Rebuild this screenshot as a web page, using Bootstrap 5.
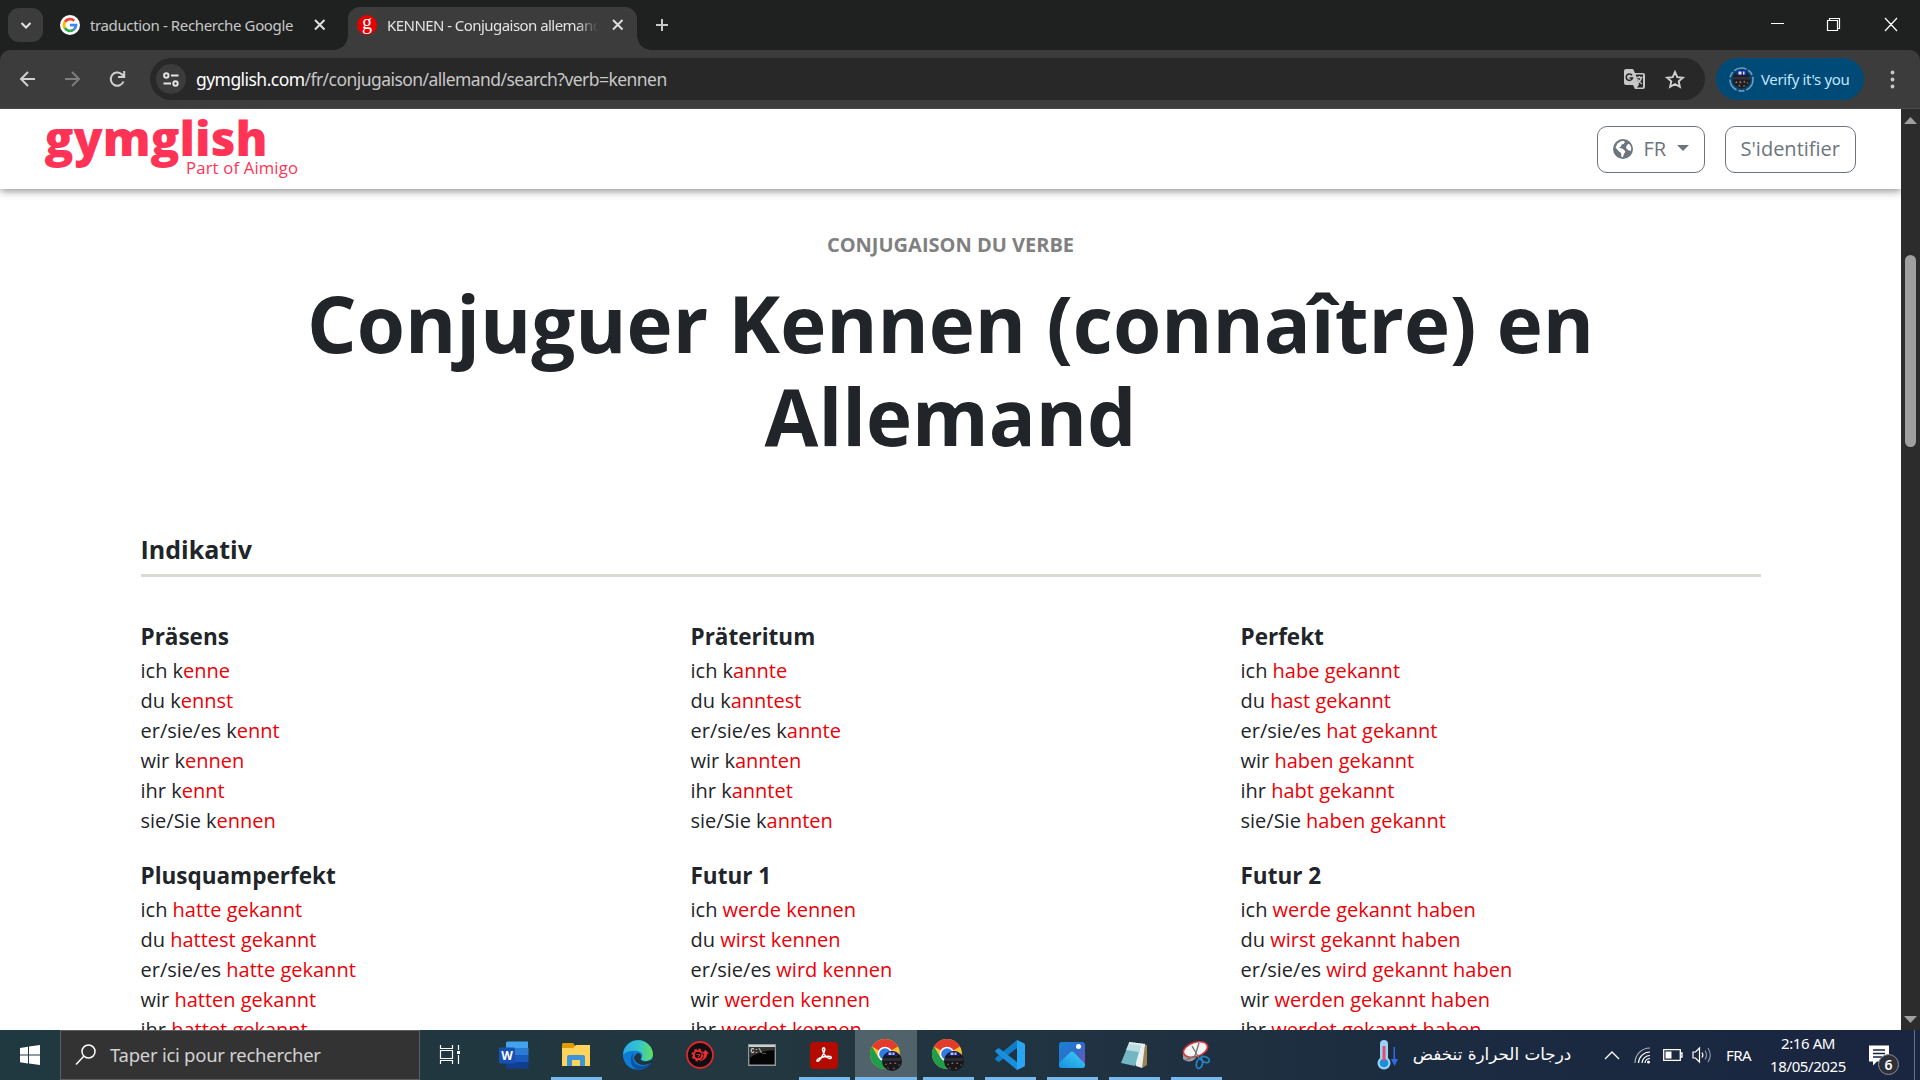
<!DOCTYPE html>
<html lang="fr">
<head>
<meta charset="utf-8">
<title>KENNEN - Conjugaison allemand</title>
<link href="https://cdn.jsdelivr.net/npm/bootstrap@5.3.0/dist/css/bootstrap.min.css" rel="stylesheet">
<script src="https://cdn.jsdelivr.net/npm/bootstrap@5.3.0/dist/js/bootstrap.bundle.min.js"></script>
<style>
  html, body { height: 1080px; overflow: hidden; }
  body { font-family: "Open Sans", "Noto Sans", sans-serif; font-size: 20px; color: #212529; background: #1f2120; }
  svg { display: block; flex: none; overflow: visible; }
  .desk { width: 1920px; height: 1080px; }
  .ui { font-family: "Noto Sans", "Open Sans", sans-serif; }

  /* browser tabs */
  .tabstrip { height: 50px; background: #1f2120; color: #c7c7c7; font-size: 15px; padding-left: 8px; }
  .tabsearch { width: 35px; height: 34px; border-radius: 11px; background: #3c3c3c; }
  .tab-idle { width: 305px; padding: 0 22px 0 17px; }
  .tab-live { width: 289px; height: 43px; margin-top: 7px; padding: 0 13px 7px 9px; border-radius: 12px 12px 0 0; background: #3c3c3c; color: #e3e3e3; position: relative; }
  .tab-live::before, .tab-live::after { content: ""; position: absolute; bottom: 0; width: 14px; height: 14px; }
  .tab-live::before { left: -14px; background: radial-gradient(circle at 0 0, transparent 13.5px, #3c3c3c 14px); }
  .tab-live::after { right: -14px; background: radial-gradient(circle at 100% 0, transparent 13.5px, #3c3c3c 14px); }
  .tab-label { white-space: nowrap; overflow: hidden; letter-spacing: -.37px; margin-left: 10px; }
  .tab-live .tab-label { width: 211px; letter-spacing: -.55px; -webkit-mask-image: linear-gradient(90deg, #000 90%, transparent); mask-image: linear-gradient(90deg, #000 90%, transparent); }

  /* address bar */
  .toolbar { height: 59px; background: #3c3c3c; border-bottom: 1px solid #4a4a4a; border-radius: 10px 10px 0 0; padding: 0 19px 0 20px; }
  .omnibox { width: 1555px; height: 42px; border-radius: 21px; background: #282828; padding: 0 20px 0 6px; }
  .sitechip { width: 30px; height: 30px; border-radius: 50%; background: #3c3c3c; }
  .url { font-size: 17.5px; color: #c7c7c7; letter-spacing: -.55px; margin-left: 10px; }
  .url b { font-weight: 400; color: #fff; }
  .verify { width: 148px; height: 42px; border-radius: 21px; background: #004a77; color: #c2e7ff; font-size: 15px; letter-spacing: -.34px; padding-left: 13px; white-space: nowrap; }

  /* site */
  .viewport { height: 921px; }
  .site { width: 1901px; height: 921px; overflow: hidden; background: #fff; }
  .sitehead { height: 80px; padding: 0 45px; box-shadow: 0 2px 8px rgba(0,0,0,.45); position: relative; background: #fff; }
  .sitehead .btn { height: 47px; border-radius: 10px; font-size: 20px; line-height: 30px; padding: 7px 15px; }
  .lang { width: 108px; }
  .verbpage { width: 1650px; margin: 0 auto; padding-top: 41px; }
  .kicker { font-size: 20px; line-height: 30px; font-weight: 700; color: #808080; margin-bottom: 17px; }
  .verbtitle { font-size: 78px; line-height: 93px; font-weight: 700; padding: 0 100px; margin-bottom: 71px; }
  .mood { font-size: 25px; line-height: 30px; font-weight: 700; margin: 0 15px 45px; padding-bottom: 10px; border-bottom: 3px solid #dadad5; }
  .tense { width: 550px; padding: 0 15px; margin-bottom: 25px; }
  .tense h3 { font-size: 22.5px; line-height: 30.8px; font-weight: 700; margin-bottom: 3px; }
  .tense li { line-height: 30px; }
  .tense i { font-style: normal; color: #eb0008; }
  .scroller { width: 19px; background: #2c2c2c; padding: 8px 0 7px; }
  .thumb { width: 11px; height: 192px; border-radius: 6px; background: #9f9f9f; margin-top: 131px; }

  /* taskbar */
  .taskbar { height: 50px; background: linear-gradient(90deg, #203840 0%, #22373f 40%, #1f3141 62%, #1b2a40 78%, #1a2540 100%); color: #fff; }
  .findbox { width: 360px; background: #333; border: 1px solid #5a5f61; font-size: 18.5px; color: #d2d2d2; padding-left: 14px; letter-spacing: -.26px; white-space: nowrap; }
  .appbtn { width: 62px; height: 50px; position: relative; }
  .appbtn.open::after { content: ""; position: absolute; left: 6px; right: 5px; bottom: 0; height: 3px; background: #76b9ed; }
  .appbtn.front { background: #50626a; }
  .appbtn.front::after { left: 0; right: 0; }
  .tray { font-size: 15.5px; white-space: nowrap; }
  .arab { font-family: "DejaVu Sans", sans-serif; font-size: 16.8px; width: 160px; }
  .clock { width: 82px; line-height: 23px; font-size: 15px; letter-spacing: -.4px; }
</style>
</head>
<body>
<svg width="0" height="0" class="position-absolute">
  <defs>
    <g id="chromeLogo">
      <circle cx="15" cy="15" r="15" fill="#fbc02d"/>
      <path d="M15 15 2 7.500A15 15 0 0 1 28 7.500Z" fill="#e33b2e"/>
      <path d="M2 7.500A15 15 0 0 0 15 30L21.500 18.700 8.500 18.700Z" fill="#1e9e4a"/>
      <circle cx="15" cy="15" r="7.300" fill="#fff"/>
      <circle cx="15" cy="15" r="5.800" fill="#2f7de1"/>
      <circle cx="22" cy="22" r="10" fill="#17171c"/>
      <path d="M16 14.500Q22 10 28 14.500V17H16z" fill="#141f6e"/><path d="M18.500 13.500h3v2.500h-3zM22.500 13.500h2v2.500h-2z" fill="#b8c2f0"/>
      <path d="M13 19h18v3H13z" fill="#2a2d36"/>
      <path d="M15 26l1-2 1 2zM19 25l1.500-2 1 2zM24 25l1-2 1.500 2zM28 27l1-2 1 1zM17 29l1-1 1 2zM23 30l1-2 1 2z" fill="#8d6450"/>
    </g>
    <path id="cross" d="M0 0 9.500 9.500M9.500 0 0 9.500" stroke="#dedede" stroke-width="2" fill="none"/>
  </defs>
</svg>

<div class="desk d-flex flex-column">
  <div class="tabstrip ui d-flex align-items-center">
    <div class="tabsearch d-flex align-items-center justify-content-center">
      <svg width="10" height="7"><path d="M.5 1 5 5.500 9.500 1" fill="none" stroke="#e3e3e3" stroke-width="2"/></svg>
    </div>
    <div class="tab-idle d-flex align-items-center">
      <svg width="20" height="20" viewBox="0 0 20 20"><circle cx="10" cy="10" r="10" fill="#fff"/>
        <g fill="none" stroke-width="2.800"><path d="M14.200 5.800A6 6 0 0 0 4.900 6.900" stroke="#ea4335"/><path d="M4.900 6.900a6 6 0 0 0 0 6.200" stroke="#fbbc05"/><path d="M4.900 13.100a6 6 0 0 0 9 1.400" stroke="#34a853"/><path d="M13.900 14.500A6 6 0 0 0 16 10.200H10" stroke="#4285f4"/></g></svg>
      <span class="tab-label flex-grow-1">traduction - Recherche Google</span>
      <svg width="11" height="10"><use href="#cross"/></svg>
    </div>
    <div class="tab-live d-flex align-items-center align-self-start">
      <svg width="20" height="20" viewBox="0 0 20 20"><circle cx="10" cy="10" r="10" fill="#e60000"/><text x="10" y="13.500" text-anchor="middle" font-family="Liberation Serif" font-size="20" fill="#fff">g</text></svg>
      <span class="tab-label">KENNEN - Conjugaison allemand</span>
      <svg class="ms-auto" width="11" height="10"><use href="#cross"/></svg>
    </div>
    <svg style="margin-left:18px" width="14" height="12"><path d="M1 6H13M7 0V12" stroke="#c7c7c7" stroke-width="2"/></svg>
    <svg class="ms-auto" width="172" height="50"><g fill="none" stroke="#fff" stroke-width="1.200"><path d="M23 23.500H36M79.500 20.500h10v10h-10zM81.500 20.500v-2h10v10h-2M137 18 149 31M149 18 137 31"/></g></svg>
  </div>

  <div class="toolbar ui d-flex align-items-center">
    <svg width="130" height="20"><g fill="none" stroke-width="2"><path d="M15 10H1M8 3 1 10 8 17" stroke="#d0d0d0"/><path d="M45 10H59M52 3 59 10 52 17" stroke="#7c7c7c"/><path d="M103.500 12.500A6.600 6.600 0 1 1 101.500 5L104 7.500M104.200 2V8H98" stroke="#d0d0d0"/></g></svg>
    <div class="omnibox d-flex align-items-center">
      <div class="sitechip d-flex align-items-center justify-content-center">
        <svg width="16" height="15"><g fill="none" stroke="#e3e3e3" stroke-width="2"><circle cx="3.300" cy="3.500" r="2.200"/><path d="M8 3.500h7.500M.5 11.500H8"/><circle cx="12.500" cy="11.500" r="2.200"/></g></svg>
      </div>
      <span class="url"><b>gymglish.com</b>/fr/conjugaison/allemand/search?verb=kennen</span>
      <svg class="ms-auto" width="21" height="21" viewBox="0 0 21 21"><path d="M2 0h7l2 4h8a2 2 0 0 1 2 2v12a2 2 0 0 1-2 2h-8l-2-4H2a2 2 0 0 1-2-2V2a2 2 0 0 1 2-2z" fill="#c7c7c7"/><path d="M11.700 5.500H19v13h-6l2-3z" fill="#282828"/><path d="M8 6.300A3.200 3.200 0 1 0 8.500 9H5.500" fill="none" stroke="#282828" stroke-width="1.500"/><path d="M12.500 8.500h6M15.500 7v1.500M17.500 8.500q-1 4-4 5.500M13.500 10q2 3.500 4.500 5" fill="none" stroke="#c7c7c7" stroke-width="1.300"/></svg>
      <svg style="margin-left:20px" width="20" height="19" viewBox="0 0 20 19"><path d="M10 2 12.300 7.100 17.900 7.700 13.700 11.400 14.900 16.900 10 14 5.100 16.900 6.300 11.400 2.100 7.700 7.700 7.100Z" fill="none" stroke="#d0d0d0" stroke-width="1.900"/></svg>
    </div>
    <div class="verify d-flex align-items-center" style="margin-left:11px">
      <svg width="25" height="25" viewBox="0 0 25 25"><circle cx="12.500" cy="12.500" r="11.500" fill="none" stroke="#6f9dbb" stroke-width="1.600" stroke-dasharray="13 2 6 2"/><circle cx="12.500" cy="12.500" r="9" fill="#1d1d24"/><path d="M7.500 5Q12.500 2 17.500 5V8h-10z" fill="#1b27a8"/><path d="M9.500 4.500h3v3h-3zM14 4.500h1.500v3H14z" fill="#dfe3ff"/><path d="M4 10h17v2.500H4z" fill="#30333c"/><path d="M6 16l1.500-2 1 2zM10 15.500l1.500-2 1 3zM14 15l1.500-1.500 1 2.500zM17.500 17l1-2 1 1zM9 19l1.500-1.500 1 2.500zM14 20l1-2 1.500 1z" fill="#a87a60"/></svg>
      <span style="margin-left:7px">Verify it's you</span>
    </div>
    <svg style="margin-left:26px" width="5" height="19"><g fill="#c7c7c7"><circle cx="2.500" cy="2.500" r="1.900"/><circle cx="2.500" cy="9.500" r="1.900"/><circle cx="2.500" cy="16.500" r="1.900"/></g></svg>
  </div>

  <div class="viewport d-flex">
    <div class="site">
      <header class="sitehead d-flex align-items-center">
        <svg width="255" height="80" fill="#ff3355" font-family="Open Sans">
          <text x="-.5" y="46.500" font-size="47.500" font-weight="800" textLength="223" lengthAdjust="spacingAndGlyphs">gymglish</text>
          <text x="141" y="65.300" font-size="16.700" textLength="112">Part of Aimigo</text>
        </svg>
        <button class="btn btn-outline-secondary lang ms-auto d-flex align-items-center">
          <svg width="20" height="20" viewBox="0 0 20 20"><circle cx="10" cy="10" r="10" fill="#6c757d"/><path d="M4.500 4.500Q7 1.800 10.500 1.700L12 3 10.500 5 8.500 5.500 8 7.500 6 8.500 10 10 12.500 12.500 11 15 9.800 18.300 8.500 18 8 14 5.500 12 2.500 8.500ZM13.500 7 15 5 17 5.500 18.300 9 17.800 12 16 11.500 14.500 10.500 13 9Z" fill="#fff"/></svg>
          <span style="margin-left:11px">FR</span>
          <svg class="ms-auto mb-1" width="12" height="7"><path d="M0 1H12L6 7Z" fill="#6c757d"/></svg>
        </button>
        <button class="btn btn-outline-secondary" style="margin-left:20px">S'identifier</button>
      </header>
      <main class="verbpage">
        <div class="kicker text-center">CONJUGAISON DU VERBE</div>
        <h1 class="verbtitle text-center">Conjuguer Kennen (connaître) en Allemand</h1>
        <h2 class="mood">Indikativ</h2>
        <div class="d-flex flex-wrap">
          <section class="tense"><h3>Präsens</h3><ul class="list-unstyled mb-0"><li>ich k<i>enne</i></li><li>du k<i>ennst</i></li><li>er/sie/es k<i>ennt</i></li><li>wir k<i>ennen</i></li><li>ihr k<i>ennt</i></li><li>sie/Sie k<i>ennen</i></li></ul></section>
          <section class="tense"><h3>Präteritum</h3><ul class="list-unstyled mb-0"><li>ich k<i>annte</i></li><li>du k<i>anntest</i></li><li>er/sie/es k<i>annte</i></li><li>wir k<i>annten</i></li><li>ihr k<i>anntet</i></li><li>sie/Sie k<i>annten</i></li></ul></section>
          <section class="tense"><h3>Perfekt</h3><ul class="list-unstyled mb-0"><li>ich <i>habe gekannt</i></li><li>du <i>hast gekannt</i></li><li>er/sie/es <i>hat gekannt</i></li><li>wir <i>haben gekannt</i></li><li>ihr <i>habt gekannt</i></li><li>sie/Sie <i>haben gekannt</i></li></ul></section>
          <section class="tense"><h3>Plusquamperfekt</h3><ul class="list-unstyled mb-0"><li>ich <i>hatte gekannt</i></li><li>du <i>hattest gekannt</i></li><li>er/sie/es <i>hatte gekannt</i></li><li>wir <i>hatten gekannt</i></li><li>ihr <i>hattet gekannt</i></li></ul></section>
          <section class="tense"><h3>Futur 1</h3><ul class="list-unstyled mb-0"><li>ich <i>werde kennen</i></li><li>du <i>wirst kennen</i></li><li>er/sie/es <i>wird kennen</i></li><li>wir <i>werden kennen</i></li><li>ihr <i>werdet kennen</i></li></ul></section>
          <section class="tense"><h3>Futur 2</h3><ul class="list-unstyled mb-0"><li>ich <i>werde gekannt haben</i></li><li>du <i>wirst gekannt haben</i></li><li>er/sie/es <i>wird gekannt haben</i></li><li>wir <i>werden gekannt haben</i></li><li>ihr <i>werdet gekannt haben</i></li></ul></section>
        </div>
      </main>
    </div>
    <div class="scroller d-flex flex-column align-items-center">
      <svg width="13" height="7"><path d="M0 7 6.500 0 13 7Z" fill="#9f9f9f"/></svg>
      <div class="thumb"></div>
      <svg class="mt-auto" width="13" height="7"><path d="M0 0 6.500 7 13 0Z" fill="#9f9f9f"/></svg>
    </div>
  </div>

  <div class="taskbar ui d-flex align-items-center">
    <svg width="60" height="50"><path d="M20 18 28 16.800V24.500H20ZM29 16.600 40 15V24.500H29ZM20 25.500H28V33.400L20 32.300ZM29 25.500H40V35L29 33.600Z" fill="#fff"/></svg>
    <div class="findbox d-flex align-items-center align-self-stretch">
      <svg width="22" height="22"><circle cx="13.500" cy="7.500" r="6.500" fill="none" stroke="#fff" stroke-width="1.500"/><path d="M9 12 1 20.500" stroke="#fff" stroke-width="1.500"/></svg>
      <span style="margin-left:13px">Taper ici pour rechercher</span>
    </div>
    <svg width="63" height="50"><g fill="none" stroke="#fff" stroke-width="1.200"><path d="M20.500 15v3.500h12V15M20.500 34v-3.500h12V34M20.500 20.500h12v8h-12zM38.500 15v5M38.500 25v9"/></g><path d="M37 21h3v3h-3z" fill="#fff"/></svg>

    <div class="appbtn d-flex align-items-center justify-content-center">
      <svg width="30" height="28" viewBox="0 0 30 28"><path d="M7 2a1.500 1.500 0 0 1 1.500-1.500H29V7.500H7z" fill="#41a5ee"/><path d="M7 7h22.500v7H7z" fill="#2b7cd3"/><path d="M7 14h22.500v7H7z" fill="#185abd"/><path d="M7 21h22.500v6.500H8.500A1.500 1.500 0 0 1 7 26z" fill="#103f91"/><rect y="6.500" width="16" height="16" rx="1.500" fill="#1650b0"/><text x="8" y="19" text-anchor="middle" font-family="Open Sans" font-weight="700" font-size="12" fill="#fff">W</text></svg>
    </div>
    <div class="appbtn open d-flex align-items-center justify-content-center">
      <svg width="28" height="24" viewBox="0 0 28 24"><path d="M0 1.500A1.500 1.500 0 0 1 1.500 0H11l2 2.500V8H0z" fill="#e09b00"/><path d="M0 5h11l3-3h14v21H0z" fill="#ffd35c"/><path d="M5 23V14a2 2 0 0 1 2-2h14a2 2 0 0 1 2 2v9h-5v-6h-8v6z" fill="#3b94d9"/></svg>
    </div>
    <div class="appbtn d-flex align-items-center justify-content-center">
      <svg width="30" height="30" viewBox="0 0 30 30"><defs><linearGradient id="edgeTop"><stop stop-color="#2aa9e8"/><stop offset=".55" stop-color="#36c6c8"/><stop offset="1" stop-color="#63e055"/></linearGradient></defs><circle cx="15" cy="15" r="15" fill="#0c7cd5"/><path d="M.3 12.500A15 15 0 0 1 30 14c0 5-4 7-7.500 7-3 0-4.500-1-4-2.500 2-2 1-7-4.500-7.500-6-.5-11 0-13.700 4z" fill="url(#edgeTop)"/><path d="M11 13c-4 6 1 14 9 13 4-.5 6-2 8-3.500A15 15 0 0 1 16 30C8 29 5 17 11 13z" fill="#0c52a0"/><path d="M12 16c1-3 4-4 6-1 .5 2-.5 3-.5 4 0 2 4 3.500 9 1.500l3.500-1.500v2.500l-3.500 2c-4 2-9 2-12-.5-2-1.500-4-4-3.500-6.500z" fill="#21343e"/></svg>
    </div>
    <div class="appbtn d-flex align-items-center justify-content-center">
      <svg width="28" height="28" viewBox="0 0 28 28"><circle cx="14" cy="14" r="13" fill="#0f0f12" stroke="#e0272c" stroke-width="1.800"/><circle cx="12" cy="14" r="4.200" fill="none" stroke="#ee2d31" stroke-width="2"/><circle cx="12" cy="14" r="5.700" fill="none" stroke="#ee2d31" stroke-width="1.600" stroke-dasharray="2.400 2.070"/><path d="M10.500 13.500h3.500M13.500 14q0 2-2 2" stroke="#ee2d31" fill="none"/><path d="M13 20q4.500-1 4.700-7H15.500L19.500 8.500l4 4.500h-2q-.5 6-8.500 8z" fill="#ee2d31" stroke="#0f0f12" stroke-width=".6"/></svg>
    </div>
    <div class="appbtn d-flex align-items-center justify-content-center">
      <svg width="28" height="22" viewBox="0 0 28 22"><path d="M.7.700h26.600v20.600H.7z" fill="#050505" stroke="#8f979b" stroke-width="1.400"/><path d="M1 1h26v2H1z" fill="#c9ced0"/><path d="M1.500 3h25v3Q10 7 1.500 14z" fill="#343434"/><text x="2.500" y="9" font-family="Liberation Mono" font-weight="700" font-size="6.500" fill="#ddd">C:\_</text></svg>
    </div>
    <div class="appbtn open d-flex align-items-center justify-content-center">
      <svg width="28" height="27" viewBox="0 0 28 27"><rect width="28" height="27" rx="4" fill="#b30b00"/><path d="M12.500 7.500c0-2.300 2.600-2.300 2.200.5C14 12 10.500 17.500 8.500 19c-1.800 1-2.200-.8-.5-2 3-2 9-3.100 12-2.500 2.200.6 1.300 2.300-.7 1.900C16 15.500 13 11.500 12.500 7.500z" fill="none" stroke="#fff" stroke-width="1.500"/></svg>
    </div>
    <div class="appbtn open front d-flex align-items-center justify-content-center"><svg width="32" height="32"><use href="#chromeLogo"/></svg></div>
    <div class="appbtn open d-flex align-items-center justify-content-center"><svg width="32" height="32"><use href="#chromeLogo"/></svg></div>
    <div class="appbtn open d-flex align-items-center justify-content-center">
      <svg width="30" height="30" viewBox="0 0 30 30"><path d="M22 0v8L4 22l-1.500-.500L.3 19.500V18z" fill="#0f7dc8"/><path d="M.3 10.500 3 8.200l1.500.3L22 22v8L.3 12z" fill="#1a8ddb"/><path d="M22 0 28.500 3Q30 3.700 30 5V25Q30 26.300 28.500 27L22 30z" fill="#2aa5f3"/></svg>
    </div>
    <div class="appbtn open d-flex align-items-center justify-content-center">
      <svg width="26" height="26" viewBox="0 0 26 26"><defs><linearGradient id="photoSky" x2="1" y2="1"><stop stop-color="#1583d8"/><stop offset=".5" stop-color="#2f6dc8"/><stop offset="1" stop-color="#8a4bb8"/></linearGradient><linearGradient id="photoHill" x1="1" y1="0" x2="0" y2="1"><stop stop-color="#3fd0f7"/><stop offset="1" stop-color="#1590dd"/></linearGradient></defs><rect width="26" height="26" rx="3" fill="url(#photoSky)"/><path d="M0 21 11 10.500q2-2 4 0L26 22v1a3 3 0 0 1-3 3H3a3 3 0 0 1-3-3z" fill="url(#photoHill)"/><circle cx="19.500" cy="4.500" r="2.500" fill="#fff"/></svg>
    </div>
    <div class="appbtn open d-flex align-items-center justify-content-center">
      <svg width="28" height="28" viewBox="0 0 28 28"><path d="M10 2 27 4 27 24 22 27z" fill="#9c8451"/><path d="M9 1 25 3 22 27 16 25z" fill="#e9eeee"/><path d="M9 2 21 4 15 25 1 22z" fill="#74b6c2"/><path d="M9 2 21 4 19 11 6 9z" fill="#b9dfe3"/><path d="M9 2 25 4" stroke="#eef4f4" stroke-width="2" stroke-dasharray="1.500 1"/></svg>
    </div>
    <div class="appbtn open d-flex align-items-center justify-content-center">
      <svg width="28" height="29" viewBox="0 0 28 29"><path d="M1 13v5q6 5 12 0l3-4z" fill="#9a9fa3"/><ellipse cx="13.500" cy="8.500" rx="12.500" ry="7" transform="rotate(-18 13.500 8.500)" fill="#f5f5f5" stroke="#d3373b" stroke-width="1.600"/><path d="M10 5 17 17M17 2 13 15 4 19" stroke="#777" stroke-width="1.400" fill="none"/><g fill="none" stroke="#2386c8" stroke-width="1.800"><ellipse cx="17.500" cy="22.500" rx="3" ry="5" transform="rotate(15 17.500 22.500)"/><ellipse cx="23" cy="18.500" rx="4.500" ry="2.700" transform="rotate(25 23 18.500)"/></g></svg>
    </div>

    <div class="tray d-flex align-items-center ms-auto">
      <svg width="22" height="32" viewBox="0 0 22 32"><path d="M3 5a4 4 0 0 1 8 0v14a6.500 6.500 0 1 1-8 0z" fill="#9bd0f7"/><circle cx="7" cy="24" r="4.300" fill="#1490df"/><path d="M5.500 7h3v15h-3z" fill="#e2516b"/><path d="M18 8v12h3l-3.500 7L14 20h2.500V8z" fill="#2f6be6"/></svg>
      <span class="arab text-center" dir="rtl" lang="ar" style="margin-left:13px">درجات الحرارة تنخفض</span>
      <svg style="margin-left:32px" width="16" height="10"><path d="M1 9 8 2 15 9" fill="none" stroke="#fff" stroke-width="1.400"/></svg>
      <svg style="margin-left:14px" width="17" height="17" viewBox="0 0 17 17"><g fill="none" stroke="#fff" stroke-width="1.200"><path d="M1 16A15 15 0 0 1 16 1" stroke="#aab2bd"/><path d="M4.500 16A11.500 11.500 0 0 1 16 5M8 16a8 8 0 0 1 8-7.500M11 16a5 5 0 0 1 5-4.500"/></g><circle cx="14.500" cy="15" r="1.500" fill="#fff"/></svg>
      <svg style="margin-left:12px" width="20" height="12"><path d="M.7.700h16.600v10.600H.7zM17.500 4h1.500v4h-1.500" fill="none" stroke="#fff" stroke-width="1.300"/><path d="M2.500 2.500h6v7h-6z" fill="#fff"/></svg>
      <svg style="margin-left:9px" width="21" height="18" viewBox="0 0 21 18"><path d="M1 6h2.500L7.500 2v14L3.500 12H1z" fill="none" stroke="#fff" stroke-width="1.200"/><path d="M10 6.500q1.700 2.500 0 5" fill="none" stroke="#fff" stroke-width="1.200"/><path d="M13 4.500q3 4.500 0 9M16 2q4.500 7 0 14" fill="none" stroke="#8b93a3" stroke-width="1.200"/></svg>
      <span style="margin-left:13px;width:27px;letter-spacing:-.6px;font-size:15px">FRA</span>
      <div class="clock text-center" style="margin-left:14px">2:16 AM<br>18/05/2025</div>
      <svg style="margin-left:20px" width="51" height="50"><path d="M0 15.500h20v16H8l-4 4v-4H0z" fill="#fff"/><path d="M4 20h12M4 23.500h12M4 27h9" stroke="#1a2540" stroke-width="1.300"/><circle cx="19.500" cy="34.500" r="10" fill="#2d3038" stroke="#8b8f96" stroke-width="1"/><text x="19.500" y="39.500" text-anchor="middle" font-family="Noto Sans" font-weight="600" font-size="14" fill="#fff">6</text><path d="M45.500 0V50" stroke="#69718a"/></svg>
    </div>
  </div>
</div>
</body>
</html>
